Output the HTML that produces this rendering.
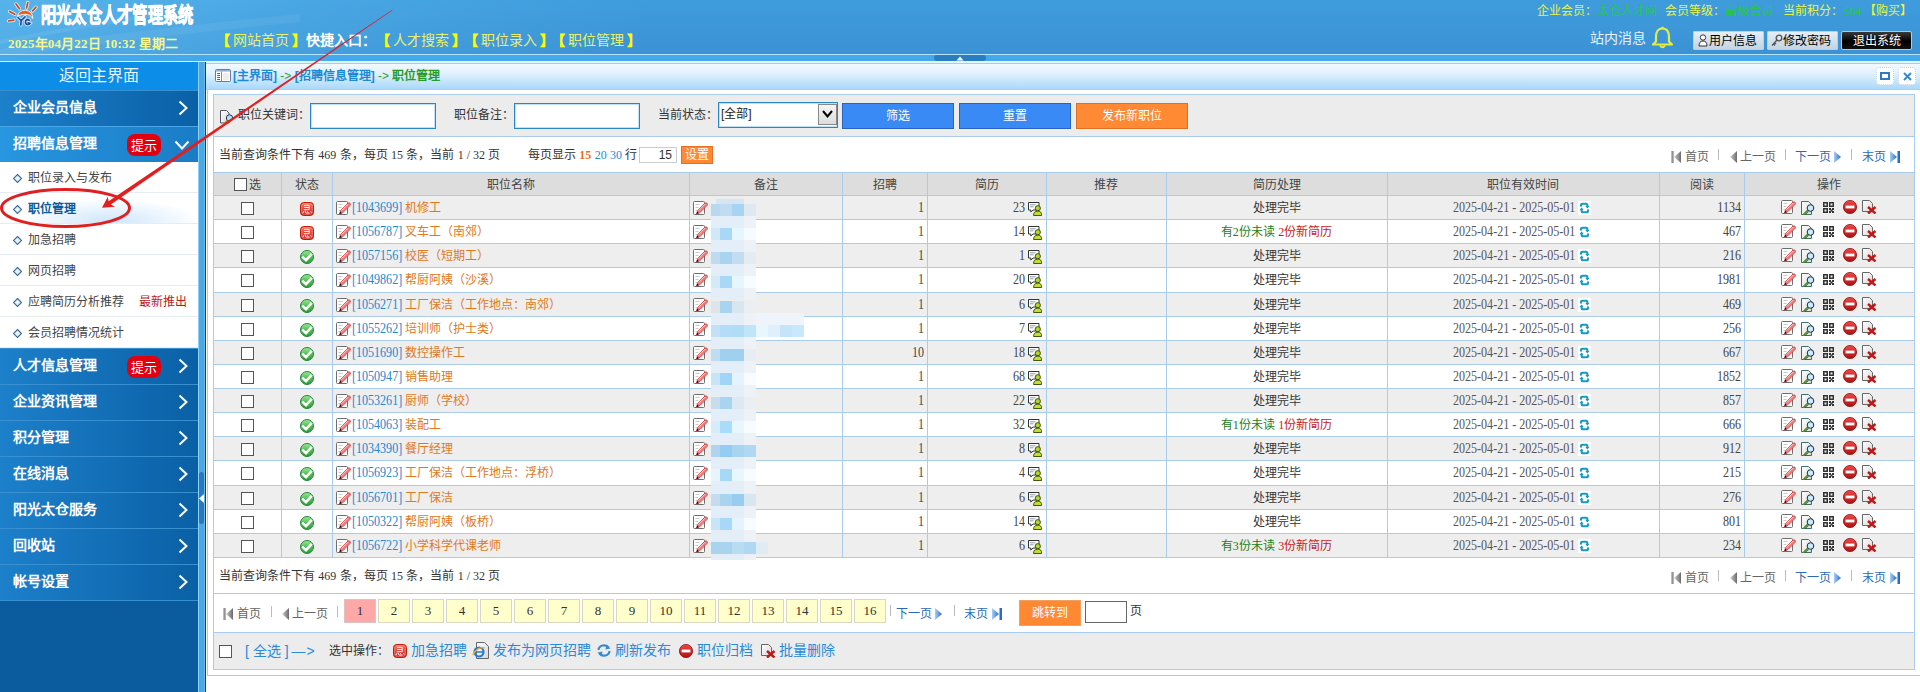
<!DOCTYPE html><html lang="zh-CN"><head><meta charset="utf-8"><style>
*{margin:0;padding:0;box-sizing:border-box}
html,body{width:1920px;height:692px;overflow:hidden;background:#fff;font-family:"Liberation Sans",sans-serif;font-size:12px;color:#333}
.a{position:absolute;white-space:nowrap}
.t12{font-size:12px;line-height:12px}
.t13{font-size:13px;line-height:13px}
.t14{font-size:14px;line-height:14px}
.t16{font-size:16px;line-height:16px}
.sf{font-family:"Liberation Serif",serif}
.b{font-weight:bold}
.nm{font-family:"Liberation Serif",serif;font-size:14px;line-height:14px;transform:scaleX(0.86)}
svg{position:absolute;overflow:visible}
</style></head><body>
<svg width="0" height="0" style="position:absolute;left:0;top:0">
<defs>
<linearGradient id="gGreen" x1="0" y1="0" x2="0" y2="1"><stop offset="0" stop-color="#9ee89a"/><stop offset="0.45" stop-color="#56c458"/><stop offset="1" stop-color="#2f9a3c"/></linearGradient>
<linearGradient id="gRed" x1="0" y1="0" x2="0" y2="1"><stop offset="0" stop-color="#ff6a5a"/><stop offset="1" stop-color="#c81e1e"/></linearGradient>
<linearGradient id="gStop" x1="0" y1="0" x2="0" y2="1"><stop offset="0" stop-color="#f04848"/><stop offset="1" stop-color="#b01010"/></linearGradient>
<linearGradient id="gPaper" x1="0" y1="0" x2="1" y2="1"><stop offset="0" stop-color="#ffffff"/><stop offset="1" stop-color="#d8d8d8"/></linearGradient>
<linearGradient id="gGray" x1="0" y1="0" x2="1" y2="0"><stop offset="0" stop-color="#d0d0d0"/><stop offset="1" stop-color="#6a6a6a"/></linearGradient>
<linearGradient id="gBlue" x1="0" y1="0" x2="1" y2="0"><stop offset="0" stop-color="#a8d0f8"/><stop offset="1" stop-color="#2a6ac8"/></linearGradient>
<symbol id="iEdit" viewBox="0 0 15 14"><rect x="0.5" y="0.5" width="11" height="13" rx="1" fill="#fff" stroke="#6e6e6e"/><path d="M2.5 3.5h4M2.5 6.5h3M2.5 9.5h2" stroke="#c8c8c8"/><path d="M3.5 13 L4.6 9.4 L11.8 2.2 Q13 1.2 14.2 2.4 Q15 3.6 14 4.6 L6.8 11.8 Z" fill="#f27a7a" stroke="#c43a3a" stroke-width="0.7"/><path d="M5.6 9.6 L12.2 3" stroke="#ffc8c8" stroke-width="1"/><path d="M3.5 13 L4.2 10.6 L5.9 12.3Z" fill="#111"/></symbol>
<symbol id="iJi" viewBox="0 0 14 14"><rect x="0.5" y="0.5" width="13" height="13" rx="3.2" fill="url(#gRed)" stroke="#b8200c"/><rect x="1.8" y="1.8" width="10.4" height="10.4" rx="2" fill="none" stroke="#ffb0a0" stroke-width="0.6" opacity="0.8"/><path d="M5 2.8 L4 4.2 M5 3.3h4.2v4.4H3.8 M4.2 5.5h5" stroke="#fff" fill="none" stroke-width="0.9"/><path d="M3 11.2 L3.5 9.3 M5.2 8.6 Q5 11 6.3 11 L9.5 11 M7.2 9 L7.7 9.7 M10.6 9.3 L11.2 10.6" stroke="#fff" fill="none" stroke-width="1"/></symbol>
<symbol id="iOk" viewBox="0 0 14 14"><circle cx="7" cy="7" r="6.5" fill="url(#gGreen)" stroke="#23863a" stroke-width="1"/><path d="M2.2 6.6 L6 10.2 L11.8 3.8" stroke="#fff" stroke-width="2.5" fill="none"/></symbol>
<symbol id="iRes" viewBox="0 0 14 14"><path d="M0.5 0.5h10.5v7.5h-6l-2.2 2v-2h-2.3z" fill="#fff" stroke="#333" stroke-width="1"/><path d="M2 2.8h5.5M2 4.8h3.5" stroke="#8a9aaa"/><circle cx="9.8" cy="6.2" r="2.6" fill="#b4d232" stroke="#2f4a00" stroke-width="0.9"/><path d="M5.6 13.5 Q5.4 9.2 9.8 9.2 Q14 9.2 13.6 13.5Z" fill="#c4dc2a" stroke="#2f4a00" stroke-width="0.9"/></symbol>
<symbol id="iRef" viewBox="0 0 13 14"><rect width="13" height="14" fill="#fff"/><g stroke="#159cc4" stroke-width="2.1" fill="none" stroke-linecap="round"><path d="M3 4.8 V4.2 Q3 2.7 4.6 2.7 H8 Q9.4 2.7 9.4 4.2 V5.4"/><path d="M10 9.2 V9.8 Q10 11.3 8.4 11.3 H5 Q3.6 11.3 3.6 9.8 V8.6"/></g><path d="M7.4 5 H11.4 L9.4 7.4Z M1.6 9 H5.6 L3.6 6.6Z" fill="#159cc4"/></symbol>
<symbol id="iView" viewBox="0 0 15 14"><path d="M0.5 0.5h7l3 3v10h-10z" fill="url(#gPaper)" stroke="#3a7070"/><circle cx="9.5" cy="7" r="3.3" fill="#c8ecff" stroke="#1a2a3a" stroke-width="1"/><path d="M7 9.6 L3 13.6" stroke="#2a5a10" stroke-width="2.2"/><path d="M7 9.6 L3 13.6" stroke="#8ad040" stroke-width="1"/></symbol>
<symbol id="iQr" viewBox="0 0 11 11"><path d="M0 0h5v5H0zM6 0h5v5H6zM0 6h5v5H0z" fill="#333"/><path d="M1.5 1.5h2v2h-2zM7.5 1.5h2v2h-2zM1.5 7.5h2v2h-2z" fill="#eee"/><path d="M6 6h2v2H6zM9 6h2v2H9zM7.5 7.5h2v2h-2zM6 9h2v2H6zM9 9h2v2H9z" fill="#333"/></symbol>
<symbol id="iStop" viewBox="0 0 14 14"><circle cx="7" cy="7" r="6.6" fill="url(#gStop)" stroke="#901010" stroke-width="0.8"/><rect x="2.6" y="5.6" width="8.8" height="2.8" fill="#fff"/></symbol>
<symbol id="iDel" viewBox="0 0 15 14"><path d="M0.5 0.5h7l3 3v8h-10z" fill="url(#gPaper)" stroke="#666"/><path d="M6 7 L13.5 13.5 M13.5 7 L6 13.5" stroke="#c01818" stroke-width="2.4"/></symbol>
<symbol id="pFirst" viewBox="0 0 10 12"><rect x="0" y="0" width="2.5" height="12" fill="url(#gGray)"/><path d="M10 0 L3 6 L10 12Z" fill="url(#gGray)"/></symbol>
<symbol id="pPrev" viewBox="0 0 7 12"><path d="M7 0 L0 6 L7 12Z" fill="url(#gGray)"/></symbol>
<symbol id="pNext" viewBox="0 0 7 12"><path d="M0 0 L7 6 L0 12Z" fill="url(#gBlue)"/></symbol>
<symbol id="pLast" viewBox="0 0 10 12"><path d="M0 0 L7 6 L0 12Z" fill="url(#gBlue)"/><rect x="7.5" y="0" width="2.5" height="12" fill="#2a6ac8"/></symbol>
<symbol id="iDiam" viewBox="0 0 9 9"><path d="M4.5 0.5 L8.5 4.5 L4.5 8.5 L0.5 4.5Z" fill="#e8f2fb" stroke="#3a6a9a" stroke-width="1.1"/></symbol>
<symbol id="iChevR" viewBox="0 0 10 16"><path d="M1.5 1.5 L8.5 8 L1.5 14.5" stroke="#fff" stroke-width="2" fill="none"/></symbol>
<symbol id="iChevD" viewBox="0 0 16 10"><path d="M1.5 1.5 L8 8.5 L14.5 1.5" stroke="#fff" stroke-width="2" fill="none"/></symbol>
</defs></svg>
<div class="a" style="left:0px;top:0px;width:1920px;height:54px;background:linear-gradient(100deg,rgba(120,215,255,0.40) 0px,rgba(110,205,255,0.22) 300px,rgba(110,205,255,0) 640px),linear-gradient(#3f9cdc,#3b92d4)"></div>
<svg style="left:0;top:0" width="700" height="54"><g stroke="#ffffff" fill="none"><path d="M-20 56 Q100 38 300 18" stroke-opacity="0.06" stroke-width="8"/><path d="M-10 44 Q60 30 160 14" stroke-opacity="0.07" stroke-width="4"/></g></svg>
<div class="a" style="left:0px;top:54px;width:1920px;height:1px;background:#b4e4ff"></div>
<div class="a" style="left:0px;top:55px;width:1920px;height:6px;background:#44a9ea"></div>
<div class="a" style="left:0px;top:61px;width:1920px;height:2px;background:#e2f6ff"></div>
<div class="a" style="left:934px;top:55px;width:52px;height:6px;background:#2a7ec0;border-radius:3px"></div>
<svg style="left:956px;top:56px" width="8" height="5"><path d="M0.5 4.5 L4 0.5 L7.5 4.5Z" fill="#fff"/></svg>
<div class="a" style="left:0px;top:63px;width:198px;height:629px;background:#0a5c9e"></div>
<div class="a" style="left:0px;top:62px;width:198px;height:28px;background:#0b8de8"></div>
<div class="a t16" style="left:0px;top:68px;width:198px;text-align:center;color:#eaf5ff">返回主界面</div>
<div class="a" style="left:0px;top:90px;width:198px;height:36px;background:linear-gradient(90deg,#1d80cb,#0a60a5);border-top:1px solid #3890d0"></div>
<div class="a t14 b" style="left:13px;top:100px;color:#fff">企业会员信息</div>
<svg style="left:178px;top:100px" width="10" height="16" viewBox="0 0 10 16"><use href="#iChevR"/></svg>
<div class="a" style="left:0px;top:126px;width:198px;height:36px;background:linear-gradient(90deg,#2896e0,#1a7cc6);border-top:1px solid #4aa6e6"></div>
<div class="a t14 b" style="left:13px;top:136px;color:#fff">招聘信息管理</div>
<div class="a" style="left:127px;top:134px;width:34px;height:22px;background:#e00010;border-radius:8px"></div>
<div class="a t13" style="left:131px;top:139px;color:#fff">提示</div>
<svg style="left:174px;top:140px" width="16" height="10" viewBox="0 0 16 10"><use href="#iChevD"/></svg>
<div class="a" style="left:0px;top:348px;width:198px;height:36px;background:linear-gradient(90deg,#1d80cb,#0a60a5);border-top:1px solid #3890d0"></div>
<div class="a t14 b" style="left:13px;top:358px;color:#fff">人才信息管理</div>
<div class="a" style="left:127px;top:356px;width:34px;height:22px;background:#e00010;border-radius:8px"></div>
<div class="a t13" style="left:131px;top:361px;color:#fff">提示</div>
<svg style="left:178px;top:358px" width="10" height="16" viewBox="0 0 10 16"><use href="#iChevR"/></svg>
<div class="a" style="left:0px;top:384px;width:198px;height:36px;background:linear-gradient(90deg,#1d80cb,#0a60a5);border-top:1px solid #3890d0"></div>
<div class="a t14 b" style="left:13px;top:394px;color:#fff">企业资讯管理</div>
<svg style="left:178px;top:394px" width="10" height="16" viewBox="0 0 10 16"><use href="#iChevR"/></svg>
<div class="a" style="left:0px;top:420px;width:198px;height:36px;background:linear-gradient(90deg,#1d80cb,#0a60a5);border-top:1px solid #3890d0"></div>
<div class="a t14 b" style="left:13px;top:430px;color:#fff">积分管理</div>
<svg style="left:178px;top:430px" width="10" height="16" viewBox="0 0 10 16"><use href="#iChevR"/></svg>
<div class="a" style="left:0px;top:456px;width:198px;height:36px;background:linear-gradient(90deg,#1d80cb,#0a60a5);border-top:1px solid #3890d0"></div>
<div class="a t14 b" style="left:13px;top:466px;color:#fff">在线消息</div>
<svg style="left:178px;top:466px" width="10" height="16" viewBox="0 0 10 16"><use href="#iChevR"/></svg>
<div class="a" style="left:0px;top:492px;width:198px;height:36px;background:linear-gradient(90deg,#1d80cb,#0a60a5);border-top:1px solid #3890d0"></div>
<div class="a t14 b" style="left:13px;top:502px;color:#fff">阳光太仓服务</div>
<svg style="left:178px;top:502px" width="10" height="16" viewBox="0 0 10 16"><use href="#iChevR"/></svg>
<div class="a" style="left:0px;top:528px;width:198px;height:36px;background:linear-gradient(90deg,#1d80cb,#0a60a5);border-top:1px solid #3890d0"></div>
<div class="a t14 b" style="left:13px;top:538px;color:#fff">回收站</div>
<svg style="left:178px;top:538px" width="10" height="16" viewBox="0 0 10 16"><use href="#iChevR"/></svg>
<div class="a" style="left:0px;top:564px;width:198px;height:36px;background:linear-gradient(90deg,#1d80cb,#0a60a5);border-top:1px solid #3890d0"></div>
<div class="a t14 b" style="left:13px;top:574px;color:#fff">帐号设置</div>
<svg style="left:178px;top:574px" width="10" height="16" viewBox="0 0 10 16"><use href="#iChevR"/></svg>
<div class="a" style="left:0px;top:600px;width:198px;height:1px;background:#3890d0"></div>
<div class="a" style="left:0px;top:162px;width:198px;height:31px;background:#fff"></div>
<div class="a t12" style="left:28px;top:172px;color:#444">职位录入与发布</div>
<div class="a" style="left:0px;top:192px;width:198px;height:1px;background:#e6ecf3"></div>
<svg style="left:13px;top:174px" width="9" height="9" viewBox="0 0 9 9"><use href="#iDiam"/></svg>
<div class="a" style="left:0px;top:193px;width:198px;height:31px;background:radial-gradient(ellipse 90px 22px at 110px 28px,#cfe6fa,#f4faff 80%,#fff)"></div>
<div class="a t12 b" style="left:28px;top:203px;color:#0a5a9c">职位管理</div>
<div class="a" style="left:0px;top:223px;width:198px;height:1px;background:#e6ecf3"></div>
<svg style="left:13px;top:205px" width="9" height="9" viewBox="0 0 9 9"><use href="#iDiam"/></svg>
<div class="a" style="left:0px;top:224px;width:198px;height:31px;background:#fff"></div>
<div class="a t12" style="left:28px;top:234px;color:#444">加急招聘</div>
<div class="a" style="left:0px;top:254px;width:198px;height:1px;background:#e6ecf3"></div>
<svg style="left:13px;top:236px" width="9" height="9" viewBox="0 0 9 9"><use href="#iDiam"/></svg>
<div class="a" style="left:0px;top:255px;width:198px;height:31px;background:#fff"></div>
<div class="a t12" style="left:28px;top:265px;color:#444">网页招聘</div>
<div class="a" style="left:0px;top:285px;width:198px;height:1px;background:#e6ecf3"></div>
<svg style="left:13px;top:267px" width="9" height="9" viewBox="0 0 9 9"><use href="#iDiam"/></svg>
<div class="a" style="left:0px;top:286px;width:198px;height:31px;background:#fff"></div>
<div class="a t12" style="left:28px;top:296px;color:#444">应聘简历分析推荐</div>
<div class="a" style="left:0px;top:316px;width:198px;height:1px;background:#e6ecf3"></div>
<svg style="left:13px;top:298px" width="9" height="9" viewBox="0 0 9 9"><use href="#iDiam"/></svg>
<div class="a" style="left:0px;top:317px;width:198px;height:31px;background:#fff"></div>
<div class="a t12" style="left:28px;top:327px;color:#444">会员招聘情况统计</div>
<div class="a" style="left:0px;top:347px;width:198px;height:1px;background:#e6ecf3"></div>
<svg style="left:13px;top:329px" width="9" height="9" viewBox="0 0 9 9"><use href="#iDiam"/></svg>
<div class="a t12" style="left:139px;top:296px;color:#c01818">最新推出</div>
<div class="a" style="left:198px;top:62px;width:1px;height:630px;background:#8fd0f4"></div>
<div class="a" style="left:199px;top:62px;width:5px;height:630px;background:#48a8e8"></div>
<div class="a" style="left:204px;top:62px;width:1px;height:630px;background:#6ab8ec"></div>
<div class="a" style="left:205px;top:62px;width:1px;height:630px;background:#1b3f62"></div>
<div class="a" style="left:199px;top:472px;width:5px;height:52px;background:#2a78c0;border-radius:3px"></div>
<svg style="left:199px;top:494px" width="5" height="9"><path d="M5 0 L0 4.5 L5 9Z" fill="#fff"/></svg>
<svg style="left:0;top:0" width="40" height="28" viewBox="0 0 40 28">
<g stroke="#e8f6ff" stroke-width="3.4" stroke-linecap="round" opacity="0.9"><path d="M16 4 L19.5 8.7"/><path d="M27.8 2.6 L26.5 8"/><path d="M36 7.2 L32.6 10.9"/><path d="M9.6 11.5 L14.8 14.3"/><path d="M8.7 20.9 L13.9 20.2"/></g>
<g stroke="#c84a1c" stroke-width="1.7" stroke-linecap="round"><path d="M16 4 L19.5 8.7"/><path d="M27.8 2.6 L26.5 8"/><path d="M36 7.2 L32.6 10.9"/><path d="M9.6 11.5 L14.8 14.3"/><path d="M8.7 20.9 L13.9 20.2"/></g>
<path d="M17.5 16 Q19 10 25.5 10.3 Q32.5 11 32.8 18.5 Q30.5 14.2 25 14.3 Q20.5 14.5 17.5 16Z" fill="#f35a12" stroke="#fff" stroke-width="0.9"/>
<g fill="none" stroke="#e6f4ff" stroke-width="3.2" stroke-linecap="round"><path d="M18 17.5 L21.2 20.5 L25 16.8 M21.2 20.5 L20.8 25"/><path d="M29.5 20.3 Q27.5 18.6 25.8 20.5 Q24.8 23 26.5 24.3 Q28.5 25.2 30 23.5 L28 22.8"/></g>
<g fill="none" stroke="#1848a0" stroke-width="1.7" stroke-linecap="round"><path d="M18 17.5 L21.2 20.5 L25 16.8 M21.2 20.5 L20.8 25"/><path d="M29.5 20.3 Q27.5 18.6 25.8 20.5 Q24.8 23 26.5 24.3 Q28.5 25.2 30 23.5 L28 22.8"/></g>
</svg>
<div class="a " style="left:41px;top:4px;font-size:21px;line-height:22px;font-weight:900;color:#fff;transform:scaleX(0.725);transform-origin:0 0;letter-spacing:0px;-webkit-text-stroke:0.9px #fff">阳光太仓人才管理系统</div>
<div class="a t13 b sf" style="left:8px;top:37px;color:#f6f68a;letter-spacing:0.16px">2025年04月22日 10:32 星期二</div>
<div class="a t14" style="left:216px;top:33px;"><span style="color:#ffff00;-webkit-text-stroke:0.7px #ffff00;margin-right:3px">【</span><span style="color:#e8f070">网站首页</span><span style="color:#ffff00;-webkit-text-stroke:0.7px #ffff00;margin-left:3px">】</span></div>
<div class="a t14 b" style="left:306px;top:33px;color:#fff">快捷入口：</div>
<div class="a t14" style="left:376px;top:33px;"><span style="color:#ffff00;-webkit-text-stroke:0.7px #ffff00;margin-right:3px">【</span><span style="color:#e8f070">人才搜索</span><span style="color:#ffff00;-webkit-text-stroke:0.7px #ffff00;margin-left:3px">】</span></div>
<div class="a t14" style="left:464px;top:33px;"><span style="color:#ffff00;-webkit-text-stroke:0.7px #ffff00;margin-right:3px">【</span><span style="color:#e8f070">职位录入</span><span style="color:#ffff00;-webkit-text-stroke:0.7px #ffff00;margin-left:3px">】</span></div>
<div class="a t14" style="left:551px;top:33px;"><span style="color:#ffff00;-webkit-text-stroke:0.7px #ffff00;margin-right:3px">【</span><span style="color:#e8f070">职位管理</span><span style="color:#ffff00;-webkit-text-stroke:0.7px #ffff00;margin-left:3px">】</span></div>
<div class="a t12" style="left:1537px;top:5px;"><span style="color:#e8f24a">企业会员：</span><span style="color:#22cc3a">太仓人才网</span></div>
<div class="a t12" style="left:1665px;top:5px;"><span style="color:#e8f24a">会员等级：</span><span style="color:#22cc3a">高级会员</span></div>
<div class="a t12" style="left:1783px;top:5px;"><span style="color:#e8f24a">当前积分：</span><span class="sf" style="color:#22cc3a">564</span> <span style="color:#e8f24a">【购买】</span></div>
<div class="a t14" style="left:1590px;top:31px;color:#e8f2ff">站内消息</div>
<svg style="left:1651px;top:26px" width="24" height="24" viewBox="0 0 24 24"><path d="M11.5 2.5 C6.5 2.5 5 6.5 5 11 L5 15.5 L2 18.5 L21 18.5 L18 15.5 L18 11 C18 6.5 16.5 2.5 11.5 2.5Z" fill="none" stroke="#e4ec40" stroke-width="2.2" stroke-linejoin="round"/><path d="M9 19.5 Q11.5 23 14 19.5" fill="none" stroke="#e4ec40" stroke-width="2"/><rect x="10.3" y="0.8" width="2.4" height="2.4" fill="#e4ec40"/></svg>
<div class="a" style="left:1693px;top:31px;width:71px;height:19px;background:linear-gradient(#e4eef6,#c4d4e2);border:1px solid #9edcf2;border-radius:1px"></div>
<div class="a t12" style="left:1709px;top:35px;color:#000">用户信息</div>
<svg style="left:1698px;top:34px" width="10" height="13" viewBox="0 0 10 13"><circle cx="5" cy="3.5" r="2.7" fill="#fff" stroke="#333" stroke-width="1"/><path d="M1 12 Q1 7 5 7 Q9 7 9 12Z" fill="#fff" stroke="#333" stroke-width="1"/></svg>
<div class="a" style="left:1767px;top:31px;width:71px;height:19px;background:linear-gradient(#e4eef6,#c4d4e2);border:1px solid #9edcf2;border-radius:1px"></div>
<div class="a t12" style="left:1783px;top:35px;color:#000">修改密码</div>
<svg style="left:1771px;top:34px" width="12" height="13" viewBox="0 0 12 13"><circle cx="8" cy="4" r="2.8" fill="none" stroke="#555" stroke-width="1.3"/><path d="M6 6 L1 11.5 M2.5 10 L4 11.5 M3.8 8.7 L5 10" stroke="#555" stroke-width="1.3"/></svg>
<div class="a" style="left:1841px;top:31px;width:71px;height:19px;background:linear-gradient(#3a3a3a,#000 55%,#111);border:1px solid #8fd8f0;border-radius:2px"></div>
<div class="a t12" style="left:1841px;top:35px;width:71px;text-align:center;color:#fff">退出系统</div>
<div class="a" style="left:206px;top:62px;width:1714px;height:1px;background:#e2f6ff"></div>
<div class="a" style="left:206px;top:63px;width:1714px;height:1px;background:#b8c8d8"></div>
<div class="a" style="left:206px;top:64px;width:1714px;height:25px;background:linear-gradient(#f2f9ff,#e2f2fe 35%,#aad9f9)"></div>
<div class="a" style="left:206px;top:89px;width:1714px;height:1px;background:#a8d0f0"></div>
<svg style="left:215px;top:69px" width="16" height="13" viewBox="0 0 16 13"><rect x="0.5" y="0.5" width="15" height="12" rx="1" fill="#fff" stroke="#6a7a98"/><rect x="1" y="1" width="14" height="1.6" fill="#9ab0d8"/><path d="M6.5 2.5v10" stroke="#7a8aa8"/><path d="M2.2 4.5h2.8M2.2 6.5h2.8M2.2 8.5h2.8M2.2 10.5h2.8" stroke="#556"/><rect x="8" y="4" width="6" height="7" fill="#ededed"/></svg>
<div class="a t12 b" style="left:233px;top:70px;"><span style="color:#1d8ad8">[主界面]</span> <span style="color:#3a9a3a;font-weight:normal">-&gt;</span> <span style="color:#1d8ad8">[招聘信息管理]</span> <span style="color:#3a9a3a;font-weight:normal">-&gt;</span> <span style="color:#2a9a2a">职位管理</span></div>
<div class="a" style="left:1876px;top:67px;width:18px;height:18px;background:#fff;border:1px dotted #bcd2e6;border-radius:4px"></div>
<div class="a" style="left:1898px;top:67px;width:18px;height:18px;background:#fff;border:1px dotted #bcd2e6;border-radius:4px"></div>
<div class="a" style="left:1880px;top:72px;width:10px;height:8px;border:2px solid #2a7ac8"></div>
<svg style="left:1903px;top:72px" width="9" height="9" viewBox="0 0 9 9"><path d="M1 1 L8 8 M8 1 L1 8" stroke="#3a86cc" stroke-width="2"/></svg>
<div class="a" style="left:207px;top:90px;width:1px;height:585px;background:#a9cbec"></div>
<div class="a" style="left:207px;top:675px;width:1713px;height:1px;background:#a9cbec"></div>
<div class="a" style="left:213px;top:94px;width:1702px;height:43px;background:#ececec;border:1px solid #a9cbec"></div>
<svg style="left:220px;top:109px" width="15" height="15" viewBox="0 0 15 15"><path d="M0.5 1.5h6l2.5 2.5v10h-8.5z" fill="url(#gPaper)" stroke="#556"/><circle cx="9.5" cy="9" r="3.2" fill="#aee4ff" stroke="#1a3a5a" stroke-width="1"/><path d="M7.3 11.3 L5 14" stroke="#c89020" stroke-width="1.8"/></svg>
<div class="a t12" style="left:238px;top:109px;color:#333">职位关键词：</div>
<div class="a" style="left:310px;top:103px;width:126px;height:26px;background:#fff;border:1px solid #2a86c8;box-shadow:inset 0 0 0 1px #bfe0f6"></div>
<div class="a t12" style="left:454px;top:109px;color:#333">职位备注：</div>
<div class="a" style="left:514px;top:103px;width:126px;height:26px;background:#fff;border:1px solid #2a86c8;box-shadow:inset 0 0 0 1px #bfe0f6"></div>
<div class="a t12" style="left:658px;top:109px;color:#333">当前状态：</div>
<div class="a" style="left:718px;top:102px;width:120px;height:26px;background:#fff;border:1px solid #2a86c8;box-shadow:inset 0 0 0 1px #bfe0f6"></div>
<div class="a t12" style="left:721px;top:108px;color:#222">[全部]</div>
<div class="a" style="left:818px;top:104px;width:19px;height:21px;background:linear-gradient(#f4f4f4,#dcdcdc);border:1px solid #888"></div>
<svg style="left:822px;top:110px" width="11" height="8" viewBox="0 0 11 8"><path d="M1 1 L5.5 6.5 L10 1" stroke="#000" stroke-width="2" fill="none"/></svg>
<div class="a" style="left:842px;top:103px;width:112px;height:26px;background:#3a8af6;border:1px solid #2a62c0"></div>
<div class="a t12" style="left:842px;top:110px;width:112px;text-align:center;color:#fff">筛选</div>
<div class="a" style="left:959px;top:103px;width:112px;height:26px;background:#3a8af6;border:1px solid #2a62c0"></div>
<div class="a t12" style="left:959px;top:110px;width:112px;text-align:center;color:#fff">重置</div>
<div class="a" style="left:1076px;top:103px;width:112px;height:26px;background:#ff8a33;border:1px solid #e07020"></div>
<div class="a t12" style="left:1076px;top:110px;width:112px;text-align:center;color:#fff">发布新职位</div>
<div class="a" style="left:213px;top:137px;width:1702px;height:36px;background:#fff;border-left:1px solid #a9cbec;border-right:1px solid #a9cbec"></div>
<div class="a t12" style="left:219px;top:149px;color:#333">当前查询条件下有 <span class="sf">469</span> 条，每页 <span class="sf">15</span> 条，当前 <span class="sf">1 / 32</span> 页</div>
<div class="a t12" style="left:528px;top:149px;color:#333">每页显示 <span class="sf b" style="color:#e8701a">15</span> <span class="sf" style="color:#2a8ad8">20</span> <span class="sf" style="color:#2a8ad8">30</span> 行</div>
<div class="a" style="left:639px;top:147px;width:38px;height:16px;background:#fff;border:1px solid #ccc"></div>
<div class="a t12" style="left:646px;top:149px;color:#333"><span style="display:inline-block;width:26px;text-align:right">15</span></div>
<div class="a" style="left:681px;top:146px;width:32px;height:18px;background:#ff8833;border:1px solid #e87020"></div>
<div class="a t12" style="left:681px;top:149px;width:32px;text-align:center;color:#fff">设置</div>
<svg style="left:1671px;top:151px" width="10" height="12" viewBox="0 0 10 12"><use href="#pFirst"/></svg>
<div class="a t12" style="left:1685px;top:151px;color:#666">首页</div>
<div class="a" style="left:1718px;top:149px;width:1px;height:11px;background:#bbb"></div>
<svg style="left:1730px;top:151px" width="7" height="12" viewBox="0 0 7 12"><use href="#pPrev"/></svg>
<div class="a t12" style="left:1740px;top:151px;color:#666">上一页</div>
<div class="a" style="left:1785px;top:149px;width:1px;height:11px;background:#bbb"></div>
<div class="a t12" style="left:1795px;top:151px;color:#2a6ab8">下一页</div>
<svg style="left:1834px;top:151px" width="7" height="12" viewBox="0 0 7 12"><use href="#pNext"/></svg>
<div class="a" style="left:1851px;top:149px;width:1px;height:11px;background:#bbb"></div>
<div class="a t12" style="left:1862px;top:151px;color:#2a6ab8">末页</div>
<svg style="left:1890px;top:151px" width="10" height="12" viewBox="0 0 10 12"><use href="#pLast"/></svg>
<div class="a" style="left:213px;top:172px;width:1702px;height:23px;background:#dddddd"></div>
<div class="a" style="left:213px;top:195px;width:1702px;height:24px;background:#eeeeee"></div>
<div class="a" style="left:213px;top:243px;width:1702px;height:24px;background:#eeeeee"></div>
<div class="a" style="left:213px;top:292px;width:1702px;height:24px;background:#eeeeee"></div>
<div class="a" style="left:213px;top:340px;width:1702px;height:24px;background:#eeeeee"></div>
<div class="a" style="left:213px;top:388px;width:1702px;height:24px;background:#eeeeee"></div>
<div class="a" style="left:213px;top:436px;width:1702px;height:24px;background:#eeeeee"></div>
<div class="a" style="left:213px;top:485px;width:1702px;height:24px;background:#eeeeee"></div>
<div class="a" style="left:213px;top:533px;width:1702px;height:24px;background:#eeeeee"></div>
<div class="a" style="left:213px;top:172px;width:1px;height:386px;background:#a9cbec"></div>
<div class="a" style="left:281px;top:172px;width:1px;height:386px;background:#a9cbec"></div>
<div class="a" style="left:332px;top:172px;width:1px;height:386px;background:#a9cbec"></div>
<div class="a" style="left:689px;top:172px;width:1px;height:386px;background:#a9cbec"></div>
<div class="a" style="left:842px;top:172px;width:1px;height:386px;background:#a9cbec"></div>
<div class="a" style="left:927px;top:172px;width:1px;height:386px;background:#a9cbec"></div>
<div class="a" style="left:1046px;top:172px;width:1px;height:386px;background:#a9cbec"></div>
<div class="a" style="left:1166px;top:172px;width:1px;height:386px;background:#a9cbec"></div>
<div class="a" style="left:1387px;top:172px;width:1px;height:386px;background:#a9cbec"></div>
<div class="a" style="left:1659px;top:172px;width:1px;height:386px;background:#a9cbec"></div>
<div class="a" style="left:1744px;top:172px;width:1px;height:386px;background:#a9cbec"></div>
<div class="a" style="left:1914px;top:172px;width:1px;height:386px;background:#a9cbec"></div>
<div class="a" style="left:213px;top:172px;width:1702px;height:1px;background:#a9cbec"></div>
<div class="a" style="left:213px;top:195px;width:1702px;height:1px;background:#a9cbec"></div>
<div class="a" style="left:213px;top:219px;width:1702px;height:1px;background:#a9cbec"></div>
<div class="a" style="left:213px;top:243px;width:1702px;height:1px;background:#a9cbec"></div>
<div class="a" style="left:213px;top:267px;width:1702px;height:1px;background:#a9cbec"></div>
<div class="a" style="left:213px;top:292px;width:1702px;height:1px;background:#a9cbec"></div>
<div class="a" style="left:213px;top:316px;width:1702px;height:1px;background:#a9cbec"></div>
<div class="a" style="left:213px;top:340px;width:1702px;height:1px;background:#a9cbec"></div>
<div class="a" style="left:213px;top:364px;width:1702px;height:1px;background:#a9cbec"></div>
<div class="a" style="left:213px;top:388px;width:1702px;height:1px;background:#a9cbec"></div>
<div class="a" style="left:213px;top:412px;width:1702px;height:1px;background:#a9cbec"></div>
<div class="a" style="left:213px;top:436px;width:1702px;height:1px;background:#a9cbec"></div>
<div class="a" style="left:213px;top:460px;width:1702px;height:1px;background:#a9cbec"></div>
<div class="a" style="left:213px;top:485px;width:1702px;height:1px;background:#a9cbec"></div>
<div class="a" style="left:213px;top:509px;width:1702px;height:1px;background:#a9cbec"></div>
<div class="a" style="left:213px;top:533px;width:1702px;height:1px;background:#a9cbec"></div>
<div class="a" style="left:213px;top:557px;width:1702px;height:1px;background:#a9cbec"></div>
<div class="a" style="left:234px;top:178px;width:13px;height:13px;background:#fff;border:1px solid #555"></div>
<div class="a t12" style="left:249px;top:179px;color:#444">选</div>
<div class="a t12" style="left:281px;top:179px;width:51px;text-align:center;color:#444">状态</div>
<div class="a t12" style="left:332px;top:179px;width:357px;text-align:center;color:#444">职位名称</div>
<div class="a t12" style="left:689px;top:179px;width:153px;text-align:center;color:#444">备注</div>
<div class="a t12" style="left:842px;top:179px;width:85px;text-align:center;color:#444">招聘</div>
<div class="a t12" style="left:927px;top:179px;width:119px;text-align:center;color:#444">简历</div>
<div class="a t12" style="left:1046px;top:179px;width:120px;text-align:center;color:#444">推荐</div>
<div class="a t12" style="left:1166px;top:179px;width:221px;text-align:center;color:#444">简历处理</div>
<div class="a t12" style="left:1387px;top:179px;width:272px;text-align:center;color:#444">职位有效时间</div>
<div class="a t12" style="left:1659px;top:179px;width:85px;text-align:center;color:#444">阅读</div>
<div class="a t12" style="left:1744px;top:179px;width:170px;text-align:center;color:#444">操作</div>
<div class="a" style="left:241px;top:202px;width:13px;height:13px;background:#fff;border:1px solid #555"></div>
<svg style="left:300px;top:202px" width="14" height="14" viewBox="0 0 14 14"><use href="#iJi"/></svg>
<svg style="left:336px;top:201px" width="15" height="14" viewBox="0 0 15 14"><use href="#iEdit"/></svg>
<div class="a nm" style="left:352px;top:201px;color:#2288cc;transform-origin:0 0">[1043699]</div>
<div class="a t12" style="left:405px;top:202px;color:#e07820">机修工</div>
<svg style="left:693px;top:201px" width="15" height="14" viewBox="0 0 15 14"><use href="#iEdit"/></svg>
<div class="a nm" style="left:624px;top:201px;width:300px;text-align:right;color:#444;transform-origin:100% 0">1</div>
<div class="a nm" style="left:725px;top:201px;width:300px;text-align:right;color:#444;transform-origin:100% 0">23</div>
<svg style="left:1028px;top:202px" width="14" height="14" viewBox="0 0 14 14"><use href="#iRes"/></svg>
<div class="a t12" style="left:1166px;top:202px;width:221px;text-align:center;color:#333">处理完毕</div>
<div class="a nm" style="left:1453px;top:201px;color:#555;transform-origin:0 0">2025-04-21 - 2025-05-01</div>
<svg style="left:1578px;top:201px" width="13" height="14" viewBox="0 0 13 14"><use href="#iRef"/></svg>
<div class="a nm" style="left:1441px;top:201px;width:300px;text-align:right;color:#444;transform-origin:100% 0">1134</div>
<svg style="left:1781px;top:200px" width="15" height="14" viewBox="0 0 15 14"><use href="#iEdit"/></svg>
<svg style="left:1801px;top:201px" width="15" height="14" viewBox="0 0 15 14"><use href="#iView"/></svg>
<svg style="left:1823px;top:202px" width="11" height="11" viewBox="0 0 11 11"><use href="#iQr"/></svg>
<svg style="left:1843px;top:200px" width="14" height="14" viewBox="0 0 14 14"><use href="#iStop"/></svg>
<svg style="left:1862px;top:200px" width="15" height="14" viewBox="0 0 15 14"><use href="#iDel"/></svg>
<div class="a" style="left:241px;top:226px;width:13px;height:13px;background:#fff;border:1px solid #555"></div>
<svg style="left:300px;top:226px" width="14" height="14" viewBox="0 0 14 14"><use href="#iJi"/></svg>
<svg style="left:336px;top:225px" width="15" height="14" viewBox="0 0 15 14"><use href="#iEdit"/></svg>
<div class="a nm" style="left:352px;top:225px;color:#2288cc;transform-origin:0 0">[1056787]</div>
<div class="a t12" style="left:405px;top:226px;color:#e07820">叉车工（南郊）</div>
<svg style="left:693px;top:225px" width="15" height="14" viewBox="0 0 15 14"><use href="#iEdit"/></svg>
<div class="a nm" style="left:624px;top:225px;width:300px;text-align:right;color:#444;transform-origin:100% 0">1</div>
<div class="a nm" style="left:725px;top:225px;width:300px;text-align:right;color:#444;transform-origin:100% 0">14</div>
<svg style="left:1028px;top:226px" width="14" height="14" viewBox="0 0 14 14"><use href="#iRes"/></svg>
<div class="a t12" style="left:1166px;top:226px;width:221px;text-align:center;"><span style="color:#1a801a">有<span class="sf">2</span>份未读</span> <span style="color:#c81a1a"><span class="sf">2</span>份新简历</span></div>
<div class="a nm" style="left:1453px;top:225px;color:#555;transform-origin:0 0">2025-04-21 - 2025-05-01</div>
<svg style="left:1578px;top:225px" width="13" height="14" viewBox="0 0 13 14"><use href="#iRef"/></svg>
<div class="a nm" style="left:1441px;top:225px;width:300px;text-align:right;color:#444;transform-origin:100% 0">467</div>
<svg style="left:1781px;top:224px" width="15" height="14" viewBox="0 0 15 14"><use href="#iEdit"/></svg>
<svg style="left:1801px;top:225px" width="15" height="14" viewBox="0 0 15 14"><use href="#iView"/></svg>
<svg style="left:1823px;top:226px" width="11" height="11" viewBox="0 0 11 11"><use href="#iQr"/></svg>
<svg style="left:1843px;top:224px" width="14" height="14" viewBox="0 0 14 14"><use href="#iStop"/></svg>
<svg style="left:1862px;top:224px" width="15" height="14" viewBox="0 0 15 14"><use href="#iDel"/></svg>
<div class="a" style="left:241px;top:250px;width:13px;height:13px;background:#fff;border:1px solid #555"></div>
<svg style="left:300px;top:250px" width="14" height="14" viewBox="0 0 14 14"><use href="#iOk"/></svg>
<svg style="left:336px;top:249px" width="15" height="14" viewBox="0 0 15 14"><use href="#iEdit"/></svg>
<div class="a nm" style="left:352px;top:249px;color:#2288cc;transform-origin:0 0">[1057156]</div>
<div class="a t12" style="left:405px;top:250px;color:#e07820">校医（短期工）</div>
<svg style="left:693px;top:249px" width="15" height="14" viewBox="0 0 15 14"><use href="#iEdit"/></svg>
<div class="a nm" style="left:624px;top:249px;width:300px;text-align:right;color:#444;transform-origin:100% 0">1</div>
<div class="a nm" style="left:725px;top:249px;width:300px;text-align:right;color:#444;transform-origin:100% 0">1</div>
<svg style="left:1028px;top:250px" width="14" height="14" viewBox="0 0 14 14"><use href="#iRes"/></svg>
<div class="a t12" style="left:1166px;top:250px;width:221px;text-align:center;color:#333">处理完毕</div>
<div class="a nm" style="left:1453px;top:249px;color:#555;transform-origin:0 0">2025-04-21 - 2025-05-01</div>
<svg style="left:1578px;top:249px" width="13" height="14" viewBox="0 0 13 14"><use href="#iRef"/></svg>
<div class="a nm" style="left:1441px;top:249px;width:300px;text-align:right;color:#444;transform-origin:100% 0">216</div>
<svg style="left:1781px;top:248px" width="15" height="14" viewBox="0 0 15 14"><use href="#iEdit"/></svg>
<svg style="left:1801px;top:249px" width="15" height="14" viewBox="0 0 15 14"><use href="#iView"/></svg>
<svg style="left:1823px;top:250px" width="11" height="11" viewBox="0 0 11 11"><use href="#iQr"/></svg>
<svg style="left:1843px;top:248px" width="14" height="14" viewBox="0 0 14 14"><use href="#iStop"/></svg>
<svg style="left:1862px;top:248px" width="15" height="14" viewBox="0 0 15 14"><use href="#iDel"/></svg>
<div class="a" style="left:241px;top:274px;width:13px;height:13px;background:#fff;border:1px solid #555"></div>
<svg style="left:300px;top:274px" width="14" height="14" viewBox="0 0 14 14"><use href="#iOk"/></svg>
<svg style="left:336px;top:273px" width="15" height="14" viewBox="0 0 15 14"><use href="#iEdit"/></svg>
<div class="a nm" style="left:352px;top:273px;color:#2288cc;transform-origin:0 0">[1049862]</div>
<div class="a t12" style="left:405px;top:274px;color:#e07820">帮厨阿姨（沙溪）</div>
<svg style="left:693px;top:273px" width="15" height="14" viewBox="0 0 15 14"><use href="#iEdit"/></svg>
<div class="a nm" style="left:624px;top:273px;width:300px;text-align:right;color:#444;transform-origin:100% 0">1</div>
<div class="a nm" style="left:725px;top:273px;width:300px;text-align:right;color:#444;transform-origin:100% 0">20</div>
<svg style="left:1028px;top:274px" width="14" height="14" viewBox="0 0 14 14"><use href="#iRes"/></svg>
<div class="a t12" style="left:1166px;top:274px;width:221px;text-align:center;color:#333">处理完毕</div>
<div class="a nm" style="left:1453px;top:273px;color:#555;transform-origin:0 0">2025-04-21 - 2025-05-01</div>
<svg style="left:1578px;top:273px" width="13" height="14" viewBox="0 0 13 14"><use href="#iRef"/></svg>
<div class="a nm" style="left:1441px;top:273px;width:300px;text-align:right;color:#444;transform-origin:100% 0">1981</div>
<svg style="left:1781px;top:272px" width="15" height="14" viewBox="0 0 15 14"><use href="#iEdit"/></svg>
<svg style="left:1801px;top:273px" width="15" height="14" viewBox="0 0 15 14"><use href="#iView"/></svg>
<svg style="left:1823px;top:274px" width="11" height="11" viewBox="0 0 11 11"><use href="#iQr"/></svg>
<svg style="left:1843px;top:272px" width="14" height="14" viewBox="0 0 14 14"><use href="#iStop"/></svg>
<svg style="left:1862px;top:272px" width="15" height="14" viewBox="0 0 15 14"><use href="#iDel"/></svg>
<div class="a" style="left:241px;top:299px;width:13px;height:13px;background:#fff;border:1px solid #555"></div>
<svg style="left:300px;top:299px" width="14" height="14" viewBox="0 0 14 14"><use href="#iOk"/></svg>
<svg style="left:336px;top:298px" width="15" height="14" viewBox="0 0 15 14"><use href="#iEdit"/></svg>
<div class="a nm" style="left:352px;top:298px;color:#2288cc;transform-origin:0 0">[1056271]</div>
<div class="a t12" style="left:405px;top:299px;color:#e07820">工厂保洁（工作地点：南郊）</div>
<svg style="left:693px;top:298px" width="15" height="14" viewBox="0 0 15 14"><use href="#iEdit"/></svg>
<div class="a nm" style="left:624px;top:298px;width:300px;text-align:right;color:#444;transform-origin:100% 0">1</div>
<div class="a nm" style="left:725px;top:298px;width:300px;text-align:right;color:#444;transform-origin:100% 0">6</div>
<svg style="left:1028px;top:299px" width="14" height="14" viewBox="0 0 14 14"><use href="#iRes"/></svg>
<div class="a t12" style="left:1166px;top:299px;width:221px;text-align:center;color:#333">处理完毕</div>
<div class="a nm" style="left:1453px;top:298px;color:#555;transform-origin:0 0">2025-04-21 - 2025-05-01</div>
<svg style="left:1578px;top:298px" width="13" height="14" viewBox="0 0 13 14"><use href="#iRef"/></svg>
<div class="a nm" style="left:1441px;top:298px;width:300px;text-align:right;color:#444;transform-origin:100% 0">469</div>
<svg style="left:1781px;top:297px" width="15" height="14" viewBox="0 0 15 14"><use href="#iEdit"/></svg>
<svg style="left:1801px;top:298px" width="15" height="14" viewBox="0 0 15 14"><use href="#iView"/></svg>
<svg style="left:1823px;top:299px" width="11" height="11" viewBox="0 0 11 11"><use href="#iQr"/></svg>
<svg style="left:1843px;top:297px" width="14" height="14" viewBox="0 0 14 14"><use href="#iStop"/></svg>
<svg style="left:1862px;top:297px" width="15" height="14" viewBox="0 0 15 14"><use href="#iDel"/></svg>
<div class="a" style="left:241px;top:323px;width:13px;height:13px;background:#fff;border:1px solid #555"></div>
<svg style="left:300px;top:323px" width="14" height="14" viewBox="0 0 14 14"><use href="#iOk"/></svg>
<svg style="left:336px;top:322px" width="15" height="14" viewBox="0 0 15 14"><use href="#iEdit"/></svg>
<div class="a nm" style="left:352px;top:322px;color:#2288cc;transform-origin:0 0">[1055262]</div>
<div class="a t12" style="left:405px;top:323px;color:#e07820">培训师（护士类）</div>
<svg style="left:693px;top:322px" width="15" height="14" viewBox="0 0 15 14"><use href="#iEdit"/></svg>
<div class="a nm" style="left:624px;top:322px;width:300px;text-align:right;color:#444;transform-origin:100% 0">1</div>
<div class="a nm" style="left:725px;top:322px;width:300px;text-align:right;color:#444;transform-origin:100% 0">7</div>
<svg style="left:1028px;top:323px" width="14" height="14" viewBox="0 0 14 14"><use href="#iRes"/></svg>
<div class="a t12" style="left:1166px;top:323px;width:221px;text-align:center;color:#333">处理完毕</div>
<div class="a nm" style="left:1453px;top:322px;color:#555;transform-origin:0 0">2025-04-21 - 2025-05-01</div>
<svg style="left:1578px;top:322px" width="13" height="14" viewBox="0 0 13 14"><use href="#iRef"/></svg>
<div class="a nm" style="left:1441px;top:322px;width:300px;text-align:right;color:#444;transform-origin:100% 0">256</div>
<svg style="left:1781px;top:321px" width="15" height="14" viewBox="0 0 15 14"><use href="#iEdit"/></svg>
<svg style="left:1801px;top:322px" width="15" height="14" viewBox="0 0 15 14"><use href="#iView"/></svg>
<svg style="left:1823px;top:323px" width="11" height="11" viewBox="0 0 11 11"><use href="#iQr"/></svg>
<svg style="left:1843px;top:321px" width="14" height="14" viewBox="0 0 14 14"><use href="#iStop"/></svg>
<svg style="left:1862px;top:321px" width="15" height="14" viewBox="0 0 15 14"><use href="#iDel"/></svg>
<div class="a" style="left:241px;top:347px;width:13px;height:13px;background:#fff;border:1px solid #555"></div>
<svg style="left:300px;top:347px" width="14" height="14" viewBox="0 0 14 14"><use href="#iOk"/></svg>
<svg style="left:336px;top:346px" width="15" height="14" viewBox="0 0 15 14"><use href="#iEdit"/></svg>
<div class="a nm" style="left:352px;top:346px;color:#2288cc;transform-origin:0 0">[1051690]</div>
<div class="a t12" style="left:405px;top:347px;color:#e07820">数控操作工</div>
<svg style="left:693px;top:346px" width="15" height="14" viewBox="0 0 15 14"><use href="#iEdit"/></svg>
<div class="a nm" style="left:624px;top:346px;width:300px;text-align:right;color:#444;transform-origin:100% 0">10</div>
<div class="a nm" style="left:725px;top:346px;width:300px;text-align:right;color:#444;transform-origin:100% 0">18</div>
<svg style="left:1028px;top:347px" width="14" height="14" viewBox="0 0 14 14"><use href="#iRes"/></svg>
<div class="a t12" style="left:1166px;top:347px;width:221px;text-align:center;color:#333">处理完毕</div>
<div class="a nm" style="left:1453px;top:346px;color:#555;transform-origin:0 0">2025-04-21 - 2025-05-01</div>
<svg style="left:1578px;top:346px" width="13" height="14" viewBox="0 0 13 14"><use href="#iRef"/></svg>
<div class="a nm" style="left:1441px;top:346px;width:300px;text-align:right;color:#444;transform-origin:100% 0">667</div>
<svg style="left:1781px;top:345px" width="15" height="14" viewBox="0 0 15 14"><use href="#iEdit"/></svg>
<svg style="left:1801px;top:346px" width="15" height="14" viewBox="0 0 15 14"><use href="#iView"/></svg>
<svg style="left:1823px;top:347px" width="11" height="11" viewBox="0 0 11 11"><use href="#iQr"/></svg>
<svg style="left:1843px;top:345px" width="14" height="14" viewBox="0 0 14 14"><use href="#iStop"/></svg>
<svg style="left:1862px;top:345px" width="15" height="14" viewBox="0 0 15 14"><use href="#iDel"/></svg>
<div class="a" style="left:241px;top:371px;width:13px;height:13px;background:#fff;border:1px solid #555"></div>
<svg style="left:300px;top:371px" width="14" height="14" viewBox="0 0 14 14"><use href="#iOk"/></svg>
<svg style="left:336px;top:370px" width="15" height="14" viewBox="0 0 15 14"><use href="#iEdit"/></svg>
<div class="a nm" style="left:352px;top:370px;color:#2288cc;transform-origin:0 0">[1050947]</div>
<div class="a t12" style="left:405px;top:371px;color:#e07820">销售助理</div>
<svg style="left:693px;top:370px" width="15" height="14" viewBox="0 0 15 14"><use href="#iEdit"/></svg>
<div class="a nm" style="left:624px;top:370px;width:300px;text-align:right;color:#444;transform-origin:100% 0">1</div>
<div class="a nm" style="left:725px;top:370px;width:300px;text-align:right;color:#444;transform-origin:100% 0">68</div>
<svg style="left:1028px;top:371px" width="14" height="14" viewBox="0 0 14 14"><use href="#iRes"/></svg>
<div class="a t12" style="left:1166px;top:371px;width:221px;text-align:center;color:#333">处理完毕</div>
<div class="a nm" style="left:1453px;top:370px;color:#555;transform-origin:0 0">2025-04-21 - 2025-05-01</div>
<svg style="left:1578px;top:370px" width="13" height="14" viewBox="0 0 13 14"><use href="#iRef"/></svg>
<div class="a nm" style="left:1441px;top:370px;width:300px;text-align:right;color:#444;transform-origin:100% 0">1852</div>
<svg style="left:1781px;top:369px" width="15" height="14" viewBox="0 0 15 14"><use href="#iEdit"/></svg>
<svg style="left:1801px;top:370px" width="15" height="14" viewBox="0 0 15 14"><use href="#iView"/></svg>
<svg style="left:1823px;top:371px" width="11" height="11" viewBox="0 0 11 11"><use href="#iQr"/></svg>
<svg style="left:1843px;top:369px" width="14" height="14" viewBox="0 0 14 14"><use href="#iStop"/></svg>
<svg style="left:1862px;top:369px" width="15" height="14" viewBox="0 0 15 14"><use href="#iDel"/></svg>
<div class="a" style="left:241px;top:395px;width:13px;height:13px;background:#fff;border:1px solid #555"></div>
<svg style="left:300px;top:395px" width="14" height="14" viewBox="0 0 14 14"><use href="#iOk"/></svg>
<svg style="left:336px;top:394px" width="15" height="14" viewBox="0 0 15 14"><use href="#iEdit"/></svg>
<div class="a nm" style="left:352px;top:394px;color:#2288cc;transform-origin:0 0">[1053261]</div>
<div class="a t12" style="left:405px;top:395px;color:#e07820">厨师（学校）</div>
<svg style="left:693px;top:394px" width="15" height="14" viewBox="0 0 15 14"><use href="#iEdit"/></svg>
<div class="a nm" style="left:624px;top:394px;width:300px;text-align:right;color:#444;transform-origin:100% 0">1</div>
<div class="a nm" style="left:725px;top:394px;width:300px;text-align:right;color:#444;transform-origin:100% 0">22</div>
<svg style="left:1028px;top:395px" width="14" height="14" viewBox="0 0 14 14"><use href="#iRes"/></svg>
<div class="a t12" style="left:1166px;top:395px;width:221px;text-align:center;color:#333">处理完毕</div>
<div class="a nm" style="left:1453px;top:394px;color:#555;transform-origin:0 0">2025-04-21 - 2025-05-01</div>
<svg style="left:1578px;top:394px" width="13" height="14" viewBox="0 0 13 14"><use href="#iRef"/></svg>
<div class="a nm" style="left:1441px;top:394px;width:300px;text-align:right;color:#444;transform-origin:100% 0">857</div>
<svg style="left:1781px;top:393px" width="15" height="14" viewBox="0 0 15 14"><use href="#iEdit"/></svg>
<svg style="left:1801px;top:394px" width="15" height="14" viewBox="0 0 15 14"><use href="#iView"/></svg>
<svg style="left:1823px;top:395px" width="11" height="11" viewBox="0 0 11 11"><use href="#iQr"/></svg>
<svg style="left:1843px;top:393px" width="14" height="14" viewBox="0 0 14 14"><use href="#iStop"/></svg>
<svg style="left:1862px;top:393px" width="15" height="14" viewBox="0 0 15 14"><use href="#iDel"/></svg>
<div class="a" style="left:241px;top:419px;width:13px;height:13px;background:#fff;border:1px solid #555"></div>
<svg style="left:300px;top:419px" width="14" height="14" viewBox="0 0 14 14"><use href="#iOk"/></svg>
<svg style="left:336px;top:418px" width="15" height="14" viewBox="0 0 15 14"><use href="#iEdit"/></svg>
<div class="a nm" style="left:352px;top:418px;color:#2288cc;transform-origin:0 0">[1054063]</div>
<div class="a t12" style="left:405px;top:419px;color:#e07820">装配工</div>
<svg style="left:693px;top:418px" width="15" height="14" viewBox="0 0 15 14"><use href="#iEdit"/></svg>
<div class="a nm" style="left:624px;top:418px;width:300px;text-align:right;color:#444;transform-origin:100% 0">1</div>
<div class="a nm" style="left:725px;top:418px;width:300px;text-align:right;color:#444;transform-origin:100% 0">32</div>
<svg style="left:1028px;top:419px" width="14" height="14" viewBox="0 0 14 14"><use href="#iRes"/></svg>
<div class="a t12" style="left:1166px;top:419px;width:221px;text-align:center;"><span style="color:#1a801a">有<span class="sf">1</span>份未读</span> <span style="color:#c81a1a"><span class="sf">1</span>份新简历</span></div>
<div class="a nm" style="left:1453px;top:418px;color:#555;transform-origin:0 0">2025-04-21 - 2025-05-01</div>
<svg style="left:1578px;top:418px" width="13" height="14" viewBox="0 0 13 14"><use href="#iRef"/></svg>
<div class="a nm" style="left:1441px;top:418px;width:300px;text-align:right;color:#444;transform-origin:100% 0">666</div>
<svg style="left:1781px;top:417px" width="15" height="14" viewBox="0 0 15 14"><use href="#iEdit"/></svg>
<svg style="left:1801px;top:418px" width="15" height="14" viewBox="0 0 15 14"><use href="#iView"/></svg>
<svg style="left:1823px;top:419px" width="11" height="11" viewBox="0 0 11 11"><use href="#iQr"/></svg>
<svg style="left:1843px;top:417px" width="14" height="14" viewBox="0 0 14 14"><use href="#iStop"/></svg>
<svg style="left:1862px;top:417px" width="15" height="14" viewBox="0 0 15 14"><use href="#iDel"/></svg>
<div class="a" style="left:241px;top:443px;width:13px;height:13px;background:#fff;border:1px solid #555"></div>
<svg style="left:300px;top:443px" width="14" height="14" viewBox="0 0 14 14"><use href="#iOk"/></svg>
<svg style="left:336px;top:442px" width="15" height="14" viewBox="0 0 15 14"><use href="#iEdit"/></svg>
<div class="a nm" style="left:352px;top:442px;color:#2288cc;transform-origin:0 0">[1034390]</div>
<div class="a t12" style="left:405px;top:443px;color:#e07820">餐厅经理</div>
<svg style="left:693px;top:442px" width="15" height="14" viewBox="0 0 15 14"><use href="#iEdit"/></svg>
<div class="a nm" style="left:624px;top:442px;width:300px;text-align:right;color:#444;transform-origin:100% 0">1</div>
<div class="a nm" style="left:725px;top:442px;width:300px;text-align:right;color:#444;transform-origin:100% 0">8</div>
<svg style="left:1028px;top:443px" width="14" height="14" viewBox="0 0 14 14"><use href="#iRes"/></svg>
<div class="a t12" style="left:1166px;top:443px;width:221px;text-align:center;color:#333">处理完毕</div>
<div class="a nm" style="left:1453px;top:442px;color:#555;transform-origin:0 0">2025-04-21 - 2025-05-01</div>
<svg style="left:1578px;top:442px" width="13" height="14" viewBox="0 0 13 14"><use href="#iRef"/></svg>
<div class="a nm" style="left:1441px;top:442px;width:300px;text-align:right;color:#444;transform-origin:100% 0">912</div>
<svg style="left:1781px;top:441px" width="15" height="14" viewBox="0 0 15 14"><use href="#iEdit"/></svg>
<svg style="left:1801px;top:442px" width="15" height="14" viewBox="0 0 15 14"><use href="#iView"/></svg>
<svg style="left:1823px;top:443px" width="11" height="11" viewBox="0 0 11 11"><use href="#iQr"/></svg>
<svg style="left:1843px;top:441px" width="14" height="14" viewBox="0 0 14 14"><use href="#iStop"/></svg>
<svg style="left:1862px;top:441px" width="15" height="14" viewBox="0 0 15 14"><use href="#iDel"/></svg>
<div class="a" style="left:241px;top:467px;width:13px;height:13px;background:#fff;border:1px solid #555"></div>
<svg style="left:300px;top:467px" width="14" height="14" viewBox="0 0 14 14"><use href="#iOk"/></svg>
<svg style="left:336px;top:466px" width="15" height="14" viewBox="0 0 15 14"><use href="#iEdit"/></svg>
<div class="a nm" style="left:352px;top:466px;color:#2288cc;transform-origin:0 0">[1056923]</div>
<div class="a t12" style="left:405px;top:467px;color:#e07820">工厂保洁（工作地点：浮桥）</div>
<svg style="left:693px;top:466px" width="15" height="14" viewBox="0 0 15 14"><use href="#iEdit"/></svg>
<div class="a nm" style="left:624px;top:466px;width:300px;text-align:right;color:#444;transform-origin:100% 0">1</div>
<div class="a nm" style="left:725px;top:466px;width:300px;text-align:right;color:#444;transform-origin:100% 0">4</div>
<svg style="left:1028px;top:467px" width="14" height="14" viewBox="0 0 14 14"><use href="#iRes"/></svg>
<div class="a t12" style="left:1166px;top:467px;width:221px;text-align:center;color:#333">处理完毕</div>
<div class="a nm" style="left:1453px;top:466px;color:#555;transform-origin:0 0">2025-04-21 - 2025-05-01</div>
<svg style="left:1578px;top:466px" width="13" height="14" viewBox="0 0 13 14"><use href="#iRef"/></svg>
<div class="a nm" style="left:1441px;top:466px;width:300px;text-align:right;color:#444;transform-origin:100% 0">215</div>
<svg style="left:1781px;top:465px" width="15" height="14" viewBox="0 0 15 14"><use href="#iEdit"/></svg>
<svg style="left:1801px;top:466px" width="15" height="14" viewBox="0 0 15 14"><use href="#iView"/></svg>
<svg style="left:1823px;top:467px" width="11" height="11" viewBox="0 0 11 11"><use href="#iQr"/></svg>
<svg style="left:1843px;top:465px" width="14" height="14" viewBox="0 0 14 14"><use href="#iStop"/></svg>
<svg style="left:1862px;top:465px" width="15" height="14" viewBox="0 0 15 14"><use href="#iDel"/></svg>
<div class="a" style="left:241px;top:492px;width:13px;height:13px;background:#fff;border:1px solid #555"></div>
<svg style="left:300px;top:492px" width="14" height="14" viewBox="0 0 14 14"><use href="#iOk"/></svg>
<svg style="left:336px;top:491px" width="15" height="14" viewBox="0 0 15 14"><use href="#iEdit"/></svg>
<div class="a nm" style="left:352px;top:491px;color:#2288cc;transform-origin:0 0">[1056701]</div>
<div class="a t12" style="left:405px;top:492px;color:#e07820">工厂保洁</div>
<svg style="left:693px;top:491px" width="15" height="14" viewBox="0 0 15 14"><use href="#iEdit"/></svg>
<div class="a nm" style="left:624px;top:491px;width:300px;text-align:right;color:#444;transform-origin:100% 0">1</div>
<div class="a nm" style="left:725px;top:491px;width:300px;text-align:right;color:#444;transform-origin:100% 0">6</div>
<svg style="left:1028px;top:492px" width="14" height="14" viewBox="0 0 14 14"><use href="#iRes"/></svg>
<div class="a t12" style="left:1166px;top:492px;width:221px;text-align:center;color:#333">处理完毕</div>
<div class="a nm" style="left:1453px;top:491px;color:#555;transform-origin:0 0">2025-04-21 - 2025-05-01</div>
<svg style="left:1578px;top:491px" width="13" height="14" viewBox="0 0 13 14"><use href="#iRef"/></svg>
<div class="a nm" style="left:1441px;top:491px;width:300px;text-align:right;color:#444;transform-origin:100% 0">276</div>
<svg style="left:1781px;top:490px" width="15" height="14" viewBox="0 0 15 14"><use href="#iEdit"/></svg>
<svg style="left:1801px;top:491px" width="15" height="14" viewBox="0 0 15 14"><use href="#iView"/></svg>
<svg style="left:1823px;top:492px" width="11" height="11" viewBox="0 0 11 11"><use href="#iQr"/></svg>
<svg style="left:1843px;top:490px" width="14" height="14" viewBox="0 0 14 14"><use href="#iStop"/></svg>
<svg style="left:1862px;top:490px" width="15" height="14" viewBox="0 0 15 14"><use href="#iDel"/></svg>
<div class="a" style="left:241px;top:516px;width:13px;height:13px;background:#fff;border:1px solid #555"></div>
<svg style="left:300px;top:516px" width="14" height="14" viewBox="0 0 14 14"><use href="#iOk"/></svg>
<svg style="left:336px;top:515px" width="15" height="14" viewBox="0 0 15 14"><use href="#iEdit"/></svg>
<div class="a nm" style="left:352px;top:515px;color:#2288cc;transform-origin:0 0">[1050322]</div>
<div class="a t12" style="left:405px;top:516px;color:#e07820">帮厨阿姨（板桥）</div>
<svg style="left:693px;top:515px" width="15" height="14" viewBox="0 0 15 14"><use href="#iEdit"/></svg>
<div class="a nm" style="left:624px;top:515px;width:300px;text-align:right;color:#444;transform-origin:100% 0">1</div>
<div class="a nm" style="left:725px;top:515px;width:300px;text-align:right;color:#444;transform-origin:100% 0">14</div>
<svg style="left:1028px;top:516px" width="14" height="14" viewBox="0 0 14 14"><use href="#iRes"/></svg>
<div class="a t12" style="left:1166px;top:516px;width:221px;text-align:center;color:#333">处理完毕</div>
<div class="a nm" style="left:1453px;top:515px;color:#555;transform-origin:0 0">2025-04-21 - 2025-05-01</div>
<svg style="left:1578px;top:515px" width="13" height="14" viewBox="0 0 13 14"><use href="#iRef"/></svg>
<div class="a nm" style="left:1441px;top:515px;width:300px;text-align:right;color:#444;transform-origin:100% 0">801</div>
<svg style="left:1781px;top:514px" width="15" height="14" viewBox="0 0 15 14"><use href="#iEdit"/></svg>
<svg style="left:1801px;top:515px" width="15" height="14" viewBox="0 0 15 14"><use href="#iView"/></svg>
<svg style="left:1823px;top:516px" width="11" height="11" viewBox="0 0 11 11"><use href="#iQr"/></svg>
<svg style="left:1843px;top:514px" width="14" height="14" viewBox="0 0 14 14"><use href="#iStop"/></svg>
<svg style="left:1862px;top:514px" width="15" height="14" viewBox="0 0 15 14"><use href="#iDel"/></svg>
<div class="a" style="left:241px;top:540px;width:13px;height:13px;background:#fff;border:1px solid #555"></div>
<svg style="left:300px;top:540px" width="14" height="14" viewBox="0 0 14 14"><use href="#iOk"/></svg>
<svg style="left:336px;top:539px" width="15" height="14" viewBox="0 0 15 14"><use href="#iEdit"/></svg>
<div class="a nm" style="left:352px;top:539px;color:#2288cc;transform-origin:0 0">[1056722]</div>
<div class="a t12" style="left:405px;top:540px;color:#e07820">小学科学代课老师</div>
<svg style="left:693px;top:539px" width="15" height="14" viewBox="0 0 15 14"><use href="#iEdit"/></svg>
<div class="a nm" style="left:624px;top:539px;width:300px;text-align:right;color:#444;transform-origin:100% 0">1</div>
<div class="a nm" style="left:725px;top:539px;width:300px;text-align:right;color:#444;transform-origin:100% 0">6</div>
<svg style="left:1028px;top:540px" width="14" height="14" viewBox="0 0 14 14"><use href="#iRes"/></svg>
<div class="a t12" style="left:1166px;top:540px;width:221px;text-align:center;"><span style="color:#1a801a">有<span class="sf">3</span>份未读</span> <span style="color:#c81a1a"><span class="sf">3</span>份新简历</span></div>
<div class="a nm" style="left:1453px;top:539px;color:#555;transform-origin:0 0">2025-04-21 - 2025-05-01</div>
<svg style="left:1578px;top:539px" width="13" height="14" viewBox="0 0 13 14"><use href="#iRef"/></svg>
<div class="a nm" style="left:1441px;top:539px;width:300px;text-align:right;color:#444;transform-origin:100% 0">234</div>
<svg style="left:1781px;top:538px" width="15" height="14" viewBox="0 0 15 14"><use href="#iEdit"/></svg>
<svg style="left:1801px;top:539px" width="15" height="14" viewBox="0 0 15 14"><use href="#iView"/></svg>
<svg style="left:1823px;top:540px" width="11" height="11" viewBox="0 0 11 11"><use href="#iQr"/></svg>
<svg style="left:1843px;top:538px" width="14" height="14" viewBox="0 0 14 14"><use href="#iStop"/></svg>
<svg style="left:1862px;top:538px" width="15" height="14" viewBox="0 0 15 14"><use href="#iDel"/></svg>
<div class="a" style="left:213px;top:557px;width:1702px;height:113px;border:1px solid #a9cbec;border-top:none"></div>
<div class="a" style="left:213px;top:593px;width:1702px;height:1px;background:#a9cbec"></div>
<div class="a" style="left:213px;top:632px;width:1702px;height:1px;background:#a9cbec"></div>
<div class="a" style="left:214px;top:633px;width:1700px;height:36px;background:#ececec"></div>
<div class="a t12" style="left:219px;top:570px;color:#333">当前查询条件下有 <span class="sf">469</span> 条，每页 <span class="sf">15</span> 条，当前 <span class="sf">1 / 32</span> 页</div>
<svg style="left:1671px;top:572px" width="10" height="12" viewBox="0 0 10 12"><use href="#pFirst"/></svg>
<div class="a t12" style="left:1685px;top:572px;color:#666">首页</div>
<div class="a" style="left:1718px;top:570px;width:1px;height:11px;background:#bbb"></div>
<svg style="left:1730px;top:572px" width="7" height="12" viewBox="0 0 7 12"><use href="#pPrev"/></svg>
<div class="a t12" style="left:1740px;top:572px;color:#666">上一页</div>
<div class="a" style="left:1785px;top:570px;width:1px;height:11px;background:#bbb"></div>
<div class="a t12" style="left:1795px;top:572px;color:#2a6ab8">下一页</div>
<svg style="left:1834px;top:572px" width="7" height="12" viewBox="0 0 7 12"><use href="#pNext"/></svg>
<div class="a" style="left:1851px;top:570px;width:1px;height:11px;background:#bbb"></div>
<div class="a t12" style="left:1862px;top:572px;color:#2a6ab8">末页</div>
<svg style="left:1890px;top:572px" width="10" height="12" viewBox="0 0 10 12"><use href="#pLast"/></svg>
<svg style="left:223px;top:608px" width="10" height="12" viewBox="0 0 10 12"><use href="#pFirst"/></svg>
<div class="a t12" style="left:237px;top:608px;color:#666">首页</div>
<div class="a" style="left:271px;top:606px;width:1px;height:11px;background:#bbb"></div>
<svg style="left:282px;top:608px" width="7" height="12" viewBox="0 0 7 12"><use href="#pPrev"/></svg>
<div class="a t12" style="left:292px;top:608px;color:#666">上一页</div>
<div class="a" style="left:337px;top:606px;width:1px;height:11px;background:#bbb"></div>
<div class="a" style="left:344px;top:599px;width:32px;height:24px;background:#ffa8a8;border:1px solid #e0c0c0"></div>
<div class="a t12 sf" style="left:344px;top:605px;width:32px;text-align:center;color:#333;font-size:13px">1</div>
<div class="a" style="left:378px;top:599px;width:32px;height:24px;background:#ffffcc;border:1px solid #d8d8c0"></div>
<div class="a t12 sf" style="left:378px;top:605px;width:32px;text-align:center;color:#333;font-size:13px">2</div>
<div class="a" style="left:412px;top:599px;width:32px;height:24px;background:#ffffcc;border:1px solid #d8d8c0"></div>
<div class="a t12 sf" style="left:412px;top:605px;width:32px;text-align:center;color:#333;font-size:13px">3</div>
<div class="a" style="left:446px;top:599px;width:32px;height:24px;background:#ffffcc;border:1px solid #d8d8c0"></div>
<div class="a t12 sf" style="left:446px;top:605px;width:32px;text-align:center;color:#333;font-size:13px">4</div>
<div class="a" style="left:480px;top:599px;width:32px;height:24px;background:#ffffcc;border:1px solid #d8d8c0"></div>
<div class="a t12 sf" style="left:480px;top:605px;width:32px;text-align:center;color:#333;font-size:13px">5</div>
<div class="a" style="left:514px;top:599px;width:32px;height:24px;background:#ffffcc;border:1px solid #d8d8c0"></div>
<div class="a t12 sf" style="left:514px;top:605px;width:32px;text-align:center;color:#333;font-size:13px">6</div>
<div class="a" style="left:548px;top:599px;width:32px;height:24px;background:#ffffcc;border:1px solid #d8d8c0"></div>
<div class="a t12 sf" style="left:548px;top:605px;width:32px;text-align:center;color:#333;font-size:13px">7</div>
<div class="a" style="left:582px;top:599px;width:32px;height:24px;background:#ffffcc;border:1px solid #d8d8c0"></div>
<div class="a t12 sf" style="left:582px;top:605px;width:32px;text-align:center;color:#333;font-size:13px">8</div>
<div class="a" style="left:616px;top:599px;width:32px;height:24px;background:#ffffcc;border:1px solid #d8d8c0"></div>
<div class="a t12 sf" style="left:616px;top:605px;width:32px;text-align:center;color:#333;font-size:13px">9</div>
<div class="a" style="left:650px;top:599px;width:32px;height:24px;background:#ffffcc;border:1px solid #d8d8c0"></div>
<div class="a t12 sf" style="left:650px;top:605px;width:32px;text-align:center;color:#333;font-size:13px">10</div>
<div class="a" style="left:684px;top:599px;width:32px;height:24px;background:#ffffcc;border:1px solid #d8d8c0"></div>
<div class="a t12 sf" style="left:684px;top:605px;width:32px;text-align:center;color:#333;font-size:13px">11</div>
<div class="a" style="left:718px;top:599px;width:32px;height:24px;background:#ffffcc;border:1px solid #d8d8c0"></div>
<div class="a t12 sf" style="left:718px;top:605px;width:32px;text-align:center;color:#333;font-size:13px">12</div>
<div class="a" style="left:752px;top:599px;width:32px;height:24px;background:#ffffcc;border:1px solid #d8d8c0"></div>
<div class="a t12 sf" style="left:752px;top:605px;width:32px;text-align:center;color:#333;font-size:13px">13</div>
<div class="a" style="left:786px;top:599px;width:32px;height:24px;background:#ffffcc;border:1px solid #d8d8c0"></div>
<div class="a t12 sf" style="left:786px;top:605px;width:32px;text-align:center;color:#333;font-size:13px">14</div>
<div class="a" style="left:820px;top:599px;width:32px;height:24px;background:#ffffcc;border:1px solid #d8d8c0"></div>
<div class="a t12 sf" style="left:820px;top:605px;width:32px;text-align:center;color:#333;font-size:13px">15</div>
<div class="a" style="left:854px;top:599px;width:32px;height:24px;background:#ffffcc;border:1px solid #d8d8c0"></div>
<div class="a t12 sf" style="left:854px;top:605px;width:32px;text-align:center;color:#333;font-size:13px">16</div>
<div class="a" style="left:890px;top:605px;width:1px;height:11px;background:#bbb"></div>
<div class="a t12" style="left:896px;top:608px;color:#2a6ab8">下一页</div>
<svg style="left:935px;top:608px" width="7" height="12" viewBox="0 0 7 12"><use href="#pNext"/></svg>
<div class="a" style="left:954px;top:605px;width:1px;height:11px;background:#bbb"></div>
<div class="a t12" style="left:964px;top:608px;color:#2a6ab8">末页</div>
<svg style="left:992px;top:608px" width="10" height="12" viewBox="0 0 10 12"><use href="#pLast"/></svg>
<div class="a" style="left:1019px;top:600px;width:62px;height:26px;background:#ff8833;border:1px solid #f0a060"></div>
<div class="a t12" style="left:1019px;top:607px;width:62px;text-align:center;color:#fff">跳转到</div>
<div class="a" style="left:1085px;top:601px;width:42px;height:22px;background:#fff;border:1px solid #666"></div>
<div class="a t12" style="left:1130px;top:605px;color:#333">页</div>
<div class="a" style="left:219px;top:645px;width:13px;height:13px;background:#fff;border:1px solid #555"></div>
<div class="a t14" style="left:245px;top:644px;color:#2a8ad8">[ 全选 ]<span style="margin-left:3px;letter-spacing:1px">—&gt;</span></div>
<div class="a t12" style="left:329px;top:645px;color:#333">选中操作：</div>
<svg style="left:393px;top:644px" width="14" height="14" viewBox="0 0 14 14"><use href="#iJi"/></svg>
<div class="a t14" style="left:411px;top:643px;color:#2a8ad8">加急招聘</div>
<svg style="left:472px;top:642px" width="18" height="17" viewBox="0 0 18 17"><path d="M4.5 0.5h8l4 4v12h-12z" fill="url(#gPaper)" stroke="#666"/><circle cx="7" cy="10" r="4.5" fill="none" stroke="#2a7ad8" stroke-width="2.2"/><path d="M3 10h8" stroke="#2a7ad8" stroke-width="1.5"/><path d="M0.5 13 Q6 4 13 6" fill="none" stroke="#f0b020" stroke-width="1.3"/></svg>
<div class="a t14" style="left:493px;top:643px;color:#2a8ad8">发布为网页招聘</div>
<svg style="left:596px;top:643px" width="16" height="15" viewBox="0 0 16 15"><path d="M2.5 7 A5.5 5 0 0 1 12.5 4.5" stroke="#3a8ad0" stroke-width="2.2" fill="none"/><path d="M10.5 1.5 L14.5 5.5 L9.5 6.5Z" fill="#3a8ad0"/><path d="M13.5 8 A5.5 5 0 0 1 3.5 10.5" stroke="#3a8ad0" stroke-width="2.2" fill="none"/><path d="M5.5 13.5 L1.5 9.5 L6.5 8.5Z" fill="#3a8ad0"/></svg>
<div class="a t14" style="left:615px;top:643px;color:#2a8ad8">刷新发布</div>
<svg style="left:679px;top:644px" width="14" height="14" viewBox="0 0 14 14"><use href="#iStop"/></svg>
<div class="a t14" style="left:697px;top:643px;color:#2a8ad8">职位归档</div>
<svg style="left:761px;top:644px" width="15" height="14" viewBox="0 0 15 14"><use href="#iDel"/></svg>
<div class="a t14" style="left:779px;top:643px;color:#2a8ad8">批量删除</div>
<div class="a" style="left:711px;top:204px;width:9px;height:12px;background:#b8d8f0"></div>
<div class="a" style="left:720px;top:204px;width:12px;height:12px;background:#c0dcf0"></div>
<div class="a" style="left:732px;top:204px;width:12px;height:12px;background:#a8d4f4"></div>
<div class="a" style="left:744px;top:204px;width:12px;height:12px;background:#dfe8f0"></div>
<div class="a" style="left:711px;top:216px;width:9px;height:12px;background:#e4eef8"></div>
<div class="a" style="left:720px;top:216px;width:12px;height:12px;background:#e4eef8"></div>
<div class="a" style="left:732px;top:216px;width:12px;height:12px;background:#e4eef8"></div>
<div class="a" style="left:744px;top:216px;width:12px;height:12px;background:#eef2f6"></div>
<div class="a" style="left:711px;top:228px;width:9px;height:12px;background:#d0e8f8"></div>
<div class="a" style="left:720px;top:228px;width:12px;height:12px;background:#a8d8f8"></div>
<div class="a" style="left:732px;top:228px;width:12px;height:12px;background:#e6f6fe"></div>
<div class="a" style="left:744px;top:228px;width:12px;height:12px;background:#f6fbfe"></div>
<div class="a" style="left:711px;top:240px;width:9px;height:12px;background:#e4eef8"></div>
<div class="a" style="left:720px;top:240px;width:12px;height:12px;background:#e4eef8"></div>
<div class="a" style="left:732px;top:240px;width:12px;height:12px;background:#e4eef8"></div>
<div class="a" style="left:744px;top:240px;width:12px;height:12px;background:#eef2f6"></div>
<div class="a" style="left:711px;top:252px;width:9px;height:12px;background:#c0daf0"></div>
<div class="a" style="left:720px;top:252px;width:12px;height:12px;background:#a8d4f0"></div>
<div class="a" style="left:732px;top:252px;width:12px;height:12px;background:#c4dcf0"></div>
<div class="a" style="left:744px;top:252px;width:12px;height:12px;background:#e4ecf2"></div>
<div class="a" style="left:711px;top:264px;width:9px;height:12px;background:#e4eef8"></div>
<div class="a" style="left:720px;top:264px;width:12px;height:12px;background:#e4eef8"></div>
<div class="a" style="left:732px;top:264px;width:12px;height:12px;background:#e4eef8"></div>
<div class="a" style="left:744px;top:264px;width:12px;height:12px;background:#eef2f6"></div>
<div class="a" style="left:711px;top:276px;width:9px;height:12px;background:#d4eaf8"></div>
<div class="a" style="left:720px;top:276px;width:12px;height:12px;background:#a8d8f8"></div>
<div class="a" style="left:732px;top:276px;width:12px;height:12px;background:#e6f6fe"></div>
<div class="a" style="left:744px;top:276px;width:12px;height:12px;background:#f8fcff"></div>
<div class="a" style="left:711px;top:288px;width:9px;height:12px;background:#e4eef8"></div>
<div class="a" style="left:720px;top:288px;width:12px;height:12px;background:#e4eef8"></div>
<div class="a" style="left:732px;top:288px;width:12px;height:12px;background:#e4eef8"></div>
<div class="a" style="left:744px;top:288px;width:12px;height:12px;background:#eef2f6"></div>
<div class="a" style="left:711px;top:301px;width:9px;height:12px;background:#dde4ea"></div>
<div class="a" style="left:720px;top:301px;width:12px;height:12px;background:#a8d4f0"></div>
<div class="a" style="left:732px;top:301px;width:12px;height:12px;background:#d8e6f0"></div>
<div class="a" style="left:744px;top:301px;width:12px;height:12px;background:#eceff2"></div>
<div class="a" style="left:711px;top:313px;width:9px;height:12px;background:#e4eef8"></div>
<div class="a" style="left:720px;top:313px;width:12px;height:12px;background:#e4eef8"></div>
<div class="a" style="left:732px;top:313px;width:12px;height:12px;background:#e4eef8"></div>
<div class="a" style="left:744px;top:313px;width:12px;height:12px;background:#eef2f6"></div>
<div class="a" style="left:756px;top:313px;width:12px;height:12px;background:#eef4fa"></div>
<div class="a" style="left:768px;top:313px;width:12px;height:12px;background:#eef4fa"></div>
<div class="a" style="left:780px;top:313px;width:12px;height:12px;background:#eef4fa"></div>
<div class="a" style="left:792px;top:313px;width:12px;height:12px;background:#eef4fa"></div>
<div class="a" style="left:711px;top:325px;width:9px;height:12px;background:#c4e0f6"></div>
<div class="a" style="left:720px;top:325px;width:12px;height:12px;background:#b4dcf8"></div>
<div class="a" style="left:732px;top:325px;width:12px;height:12px;background:#b0dcf8"></div>
<div class="a" style="left:744px;top:325px;width:12px;height:12px;background:#c0e4fa"></div>
<div class="a" style="left:756px;top:325px;width:12px;height:12px;background:#e8f6fe"></div>
<div class="a" style="left:768px;top:325px;width:12px;height:12px;background:#dff0fc"></div>
<div class="a" style="left:780px;top:325px;width:12px;height:12px;background:#c4e4fa"></div>
<div class="a" style="left:792px;top:325px;width:12px;height:12px;background:#c8e8fc"></div>
<div class="a" style="left:711px;top:337px;width:9px;height:12px;background:#e4eef8"></div>
<div class="a" style="left:720px;top:337px;width:12px;height:12px;background:#e4eef8"></div>
<div class="a" style="left:732px;top:337px;width:12px;height:12px;background:#e4eef8"></div>
<div class="a" style="left:744px;top:337px;width:12px;height:12px;background:#eef2f6"></div>
<div class="a" style="left:711px;top:349px;width:9px;height:12px;background:#c0dcf0"></div>
<div class="a" style="left:720px;top:349px;width:12px;height:12px;background:#a0d0f0"></div>
<div class="a" style="left:732px;top:349px;width:12px;height:12px;background:#a0d0f0"></div>
<div class="a" style="left:744px;top:349px;width:12px;height:12px;background:#e6eef4"></div>
<div class="a" style="left:711px;top:361px;width:9px;height:12px;background:#e4eef8"></div>
<div class="a" style="left:720px;top:361px;width:12px;height:12px;background:#e4eef8"></div>
<div class="a" style="left:732px;top:361px;width:12px;height:12px;background:#e4eef8"></div>
<div class="a" style="left:744px;top:361px;width:12px;height:12px;background:#eef2f6"></div>
<div class="a" style="left:711px;top:373px;width:9px;height:12px;background:#c8e4f8"></div>
<div class="a" style="left:720px;top:373px;width:12px;height:12px;background:#a0d4f8"></div>
<div class="a" style="left:732px;top:373px;width:12px;height:12px;background:#e4f4fe"></div>
<div class="a" style="left:744px;top:373px;width:12px;height:12px;background:#f8fcff"></div>
<div class="a" style="left:711px;top:385px;width:9px;height:12px;background:#e4eef8"></div>
<div class="a" style="left:720px;top:385px;width:12px;height:12px;background:#e4eef8"></div>
<div class="a" style="left:732px;top:385px;width:12px;height:12px;background:#e4eef8"></div>
<div class="a" style="left:744px;top:385px;width:12px;height:12px;background:#eef2f6"></div>
<div class="a" style="left:711px;top:397px;width:9px;height:12px;background:#c8dcec"></div>
<div class="a" style="left:720px;top:397px;width:12px;height:12px;background:#a8d4f0"></div>
<div class="a" style="left:732px;top:397px;width:12px;height:12px;background:#dce8f2"></div>
<div class="a" style="left:744px;top:397px;width:12px;height:12px;background:#eceff2"></div>
<div class="a" style="left:711px;top:409px;width:9px;height:12px;background:#e4eef8"></div>
<div class="a" style="left:720px;top:409px;width:12px;height:12px;background:#e4eef8"></div>
<div class="a" style="left:732px;top:409px;width:12px;height:12px;background:#e4eef8"></div>
<div class="a" style="left:744px;top:409px;width:12px;height:12px;background:#eef2f6"></div>
<div class="a" style="left:711px;top:421px;width:9px;height:12px;background:#d4ecfc"></div>
<div class="a" style="left:720px;top:421px;width:12px;height:12px;background:#a8dcfc"></div>
<div class="a" style="left:732px;top:421px;width:12px;height:12px;background:#e8f6fe"></div>
<div class="a" style="left:744px;top:421px;width:12px;height:12px;background:#f8fcff"></div>
<div class="a" style="left:711px;top:433px;width:9px;height:12px;background:#e4eef8"></div>
<div class="a" style="left:720px;top:433px;width:12px;height:12px;background:#e4eef8"></div>
<div class="a" style="left:732px;top:433px;width:12px;height:12px;background:#e4eef8"></div>
<div class="a" style="left:744px;top:433px;width:12px;height:12px;background:#eef2f6"></div>
<div class="a" style="left:711px;top:445px;width:9px;height:12px;background:#b0d4f0"></div>
<div class="a" style="left:720px;top:445px;width:12px;height:12px;background:#94ccf2"></div>
<div class="a" style="left:732px;top:445px;width:12px;height:12px;background:#a8d4f0"></div>
<div class="a" style="left:744px;top:445px;width:12px;height:12px;background:#b0d8f4"></div>
<div class="a" style="left:711px;top:457px;width:9px;height:12px;background:#e4eef8"></div>
<div class="a" style="left:720px;top:457px;width:12px;height:12px;background:#e4eef8"></div>
<div class="a" style="left:732px;top:457px;width:12px;height:12px;background:#e4eef8"></div>
<div class="a" style="left:744px;top:457px;width:12px;height:12px;background:#eef2f6"></div>
<div class="a" style="left:711px;top:469px;width:9px;height:12px;background:#e8f4fc"></div>
<div class="a" style="left:720px;top:469px;width:12px;height:12px;background:#a8d8f8"></div>
<div class="a" style="left:732px;top:469px;width:12px;height:12px;background:#e8f6fe"></div>
<div class="a" style="left:744px;top:469px;width:12px;height:12px;background:#f8fcff"></div>
<div class="a" style="left:711px;top:481px;width:9px;height:12px;background:#e4eef8"></div>
<div class="a" style="left:720px;top:481px;width:12px;height:12px;background:#e4eef8"></div>
<div class="a" style="left:732px;top:481px;width:12px;height:12px;background:#e4eef8"></div>
<div class="a" style="left:744px;top:481px;width:12px;height:12px;background:#eef2f6"></div>
<div class="a" style="left:711px;top:494px;width:9px;height:12px;background:#c4dcee"></div>
<div class="a" style="left:720px;top:494px;width:12px;height:12px;background:#a8d4f0"></div>
<div class="a" style="left:732px;top:494px;width:12px;height:12px;background:#98ccf0"></div>
<div class="a" style="left:744px;top:494px;width:12px;height:12px;background:#d8e6f0"></div>
<div class="a" style="left:711px;top:506px;width:9px;height:12px;background:#e4eef8"></div>
<div class="a" style="left:720px;top:506px;width:12px;height:12px;background:#e4eef8"></div>
<div class="a" style="left:732px;top:506px;width:12px;height:12px;background:#e4eef8"></div>
<div class="a" style="left:744px;top:506px;width:12px;height:12px;background:#eef2f6"></div>
<div class="a" style="left:711px;top:518px;width:9px;height:12px;background:#c8e4f8"></div>
<div class="a" style="left:720px;top:518px;width:12px;height:12px;background:#a8d8f8"></div>
<div class="a" style="left:732px;top:518px;width:12px;height:12px;background:#e4f4fe"></div>
<div class="a" style="left:744px;top:518px;width:12px;height:12px;background:#f8fcff"></div>
<div class="a" style="left:711px;top:530px;width:9px;height:12px;background:#e4eef8"></div>
<div class="a" style="left:720px;top:530px;width:12px;height:12px;background:#e4eef8"></div>
<div class="a" style="left:732px;top:530px;width:12px;height:12px;background:#e4eef8"></div>
<div class="a" style="left:744px;top:530px;width:12px;height:12px;background:#eef2f6"></div>
<div class="a" style="left:711px;top:542px;width:9px;height:12px;background:#a8d4f0"></div>
<div class="a" style="left:720px;top:542px;width:12px;height:12px;background:#a8d4f0"></div>
<div class="a" style="left:732px;top:542px;width:12px;height:12px;background:#b8dcf2"></div>
<div class="a" style="left:744px;top:542px;width:12px;height:12px;background:#b0d8f4"></div>
<div class="a" style="left:756px;top:542px;width:12px;height:12px;background:#e0ecf4"></div>
<div class="a" style="left:711px;top:554px;width:9px;height:6px;background:#e4eef8"></div>
<div class="a" style="left:720px;top:554px;width:12px;height:6px;background:#e4eef8"></div>
<div class="a" style="left:732px;top:554px;width:12px;height:6px;background:#e4eef8"></div>
<div class="a" style="left:744px;top:554px;width:12px;height:6px;background:#eef2f6"></div>
<div class="a" style="left:716px;top:199px;width:28px;height:5px;background:#d4e6f4"></div>
<svg style="left:0;top:0" width="1920" height="692" viewBox="0 0 1920 692">
<ellipse cx="65.5" cy="208" rx="64" ry="18.5" fill="none" stroke="#e02020" stroke-width="3"/>
<path d="M102 207.7 L107.8 196.8 L108.6 201.2 L392.21 9.79 L392.49 10.21 L110.8 204.5 L115 206.8 Z" fill="#e41e1e"/>
</svg>
</body></html>
